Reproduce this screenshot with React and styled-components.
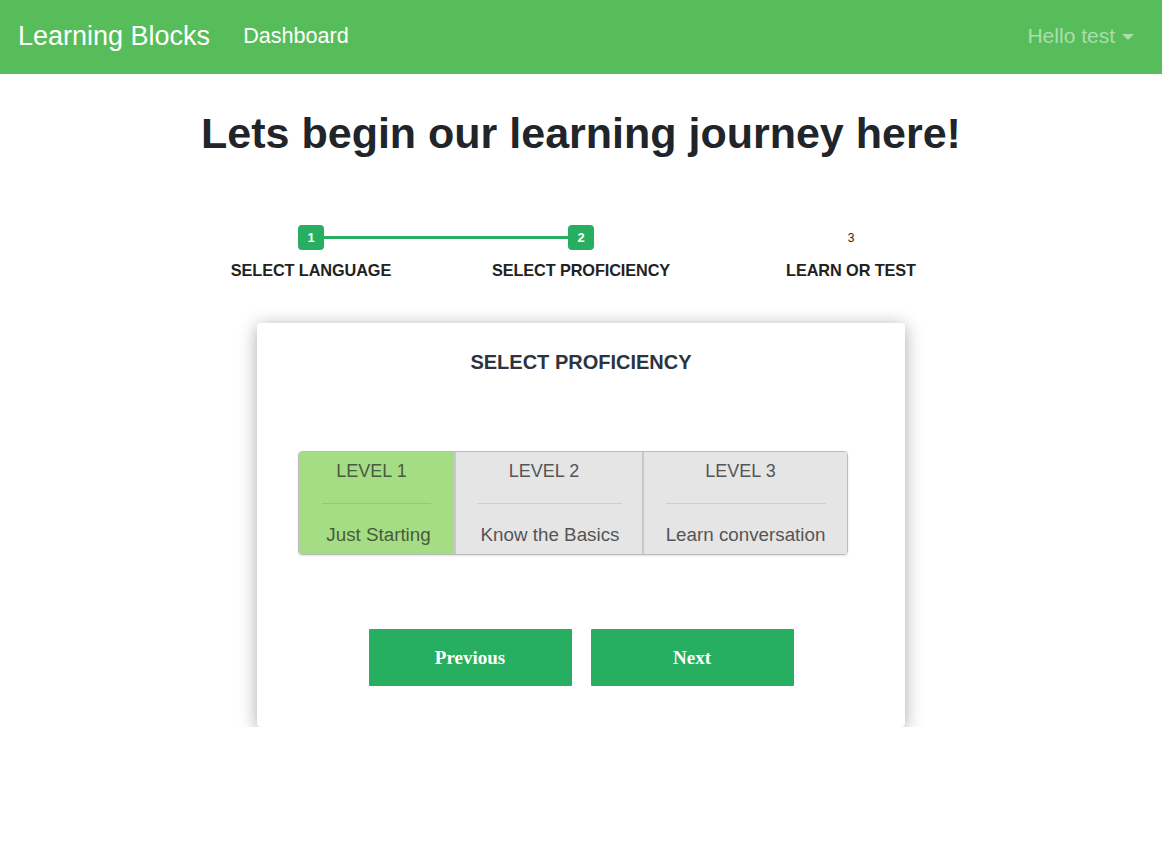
import React from "react";
import styled, { createGlobalStyle } from "styled-components";

const Global = createGlobalStyle`
  html, body { margin: 0; padding: 0; background: #fff; }
  body { font-family: "Liberation Sans", Arial, sans-serif; color: #212529; }
`;

const Nav = styled.nav`
  height: 74px;
  background: #56bd5a;
  display: flex;
  align-items: center;
  padding: 0 28px 0 18px;
  box-sizing: border-box;
`;
const Brand = styled.span`
  font-size: 27px;
  color: #fff;
  margin-right: 33px;
  padding-bottom: 2px;
`;
const NavLink = styled.span`
  font-size: ${(p) => (p.muted ? "21px" : "21.6px")};
  color: ${(p) => (p.muted ? "rgba(255,255,255,0.5)" : "#fff")};
  display: flex;
  align-items: center;
  gap: 5px;
  padding-bottom: 2px;
`;
const Spacer = styled.div` flex: 1; `;
const Caret = styled.span`
  width: 0; height: 0;
  border-left: 6px solid transparent;
  border-right: 6px solid transparent;
  border-top: 6px solid rgba(255,255,255,0.5);
  margin-left: 2px;
  margin-top: 1px;
`;

const Main = styled.main`
  display: flex;
  flex-direction: column;
  align-items: center;
`;
const Title = styled.h1`
  margin: 33px 0 0;
  font-size: 43px;
  font-weight: 700;
  color: #212529;
  line-height: 52px;
`;

const Stepper = styled.div`
  margin-top: 66px;
  display: grid;
  grid-template-columns: repeat(3, 270px);
`;
const Step = styled.div`
  display: flex;
  flex-direction: column;
  align-items: center;
  position: relative;
`;
const Dot = styled.div`
  width: 26px;
  height: 25px;
  border-radius: 4px;
  background: ${(p) => (p.active ? "#27ae60" : "transparent")};
  color: ${(p) => (p.active ? "#fff" : "#222")};
  font-size: ${(p) => (p.active ? "13px" : "12px")};
  font-weight: ${(p) => (p.active ? 700 : 400)};
  display: flex;
  align-items: center;
  justify-content: center;
  position: relative;
  z-index: 1;
`;
const Connector = styled.div`
  position: absolute;
  top: 11px;
  left: calc(50% + 13px);
  width: 244px;
  height: 3px;
  background: #27ae60;
`;
const StepLabel = styled.div`
  margin-top: 11px;
  font-size: 16.3px;
  font-weight: 700;
  color: #222;
  letter-spacing: -0.1px;
`;

const Card = styled.section`
  margin-top: 43px;
  width: 648px;
  background: #fff;
  border-radius: 4px;
  box-shadow: 0 3px 18px rgba(0,0,0,0.35);
  display: flex;
  flex-direction: column;
  align-items: center;
  padding: 27px 0 41px;
  box-sizing: border-box;
`;
const CardTitle = styled.h2`
  margin: 0;
  font-size: 20px;
  font-weight: 700;
  color: #2c3440;
  line-height: 24px;
`;

const Levels = styled.div`
  margin-top: 77px;
  align-self: flex-start;
  margin-left: 41px;
  display: flex;
  border: 1px solid #bbb;
  border-radius: 4px;
  overflow: hidden;
  box-shadow: 0 1px 2px rgba(0,0,0,0.12);
`;
const Level = styled.div`
  width: ${(p) => p.w}px;
  box-sizing: border-box;
  height: 102px;
  background: ${(p) => (p.active ? "#a5dd84" : "#e5e5e5")};
  border-left: ${(p) => (p.first ? "none" : "2px solid #c8c8c8")};
  display: flex;
  flex-direction: column;
  align-items: center;
  font-size: 18px;
  padding-top: 8px;
`;
const LevelName = styled.div`
  line-height: 22px;
  padding-right: 10px;
  color: ${(p) => (p.active ? "#4a5a40" : "#555")};
`;
const Rule = styled.div`
  width: ${(p) => p.w}px;
  height: 1px;
  background: ${(p) => (p.active ? "#8fcc70" : "#cfcfcf")};
  margin: 21px 0 20px;
`;
const LevelDesc = styled.div`
  line-height: 22px;
  font-size: 18.8px;
  color: ${(p) => (p.active ? "#4a5a40" : "#555")};
  padding-left: ${(p) => p.pl || 0}px;
`;

const Buttons = styled.div`
  margin-top: 74px;
  display: flex;
  gap: 19px;
`;
const Button = styled.button`
  width: 203px;
  height: 57px;
  border: none;
  border-radius: 1px;
  background: #27ae60;
  color: #fff;
  font-family: "Liberation Serif", "Times New Roman", serif;
  font-weight: 700;
  font-size: 19px;
  cursor: pointer;
`;

const levels = [
  { name: "LEVEL 1", desc: "Just Starting", w: 155, rw: 109, active: true, pl: 4 },
  { name: "LEVEL 2", desc: "Know the Basics", w: 188, rw: 145, pl: 2 },
  { name: "LEVEL 3", desc: "Learn conversation", w: 205, rw: 160, pl: 0 },
];

export default function App() {
  return (
    <>
      <Global />
      <Nav>
        <Brand>Learning Blocks</Brand>
        <NavLink>Dashboard</NavLink>
        <Spacer />
        <NavLink muted>
          Hello test <Caret />
        </NavLink>
      </Nav>
      <Main>
        <Title>Lets begin our learning journey here!</Title>
        <Stepper>
          <Step>
            <Connector />
            <Dot active>1</Dot>
            <StepLabel>SELECT LANGUAGE</StepLabel>
          </Step>
          <Step>
            <Dot active>2</Dot>
            <StepLabel>SELECT PROFICIENCY</StepLabel>
          </Step>
          <Step>
            <Dot>3</Dot>
            <StepLabel>LEARN OR TEST</StepLabel>
          </Step>
        </Stepper>
        <Card>
          <CardTitle>SELECT PROFICIENCY</CardTitle>
          <Levels>
            {levels.map((l, i) => (
              <Level key={l.name} w={l.w} active={l.active} first={i === 0}>
                <LevelName active={l.active}>{l.name}</LevelName>
                <Rule w={l.rw} active={l.active} />
                <LevelDesc active={l.active} pl={l.pl}>{l.desc}</LevelDesc>
              </Level>
            ))}
          </Levels>
          <Buttons>
            <Button>Previous</Button>
            <Button>Next</Button>
          </Buttons>
        </Card>
      </Main>
    </>
  );
}
